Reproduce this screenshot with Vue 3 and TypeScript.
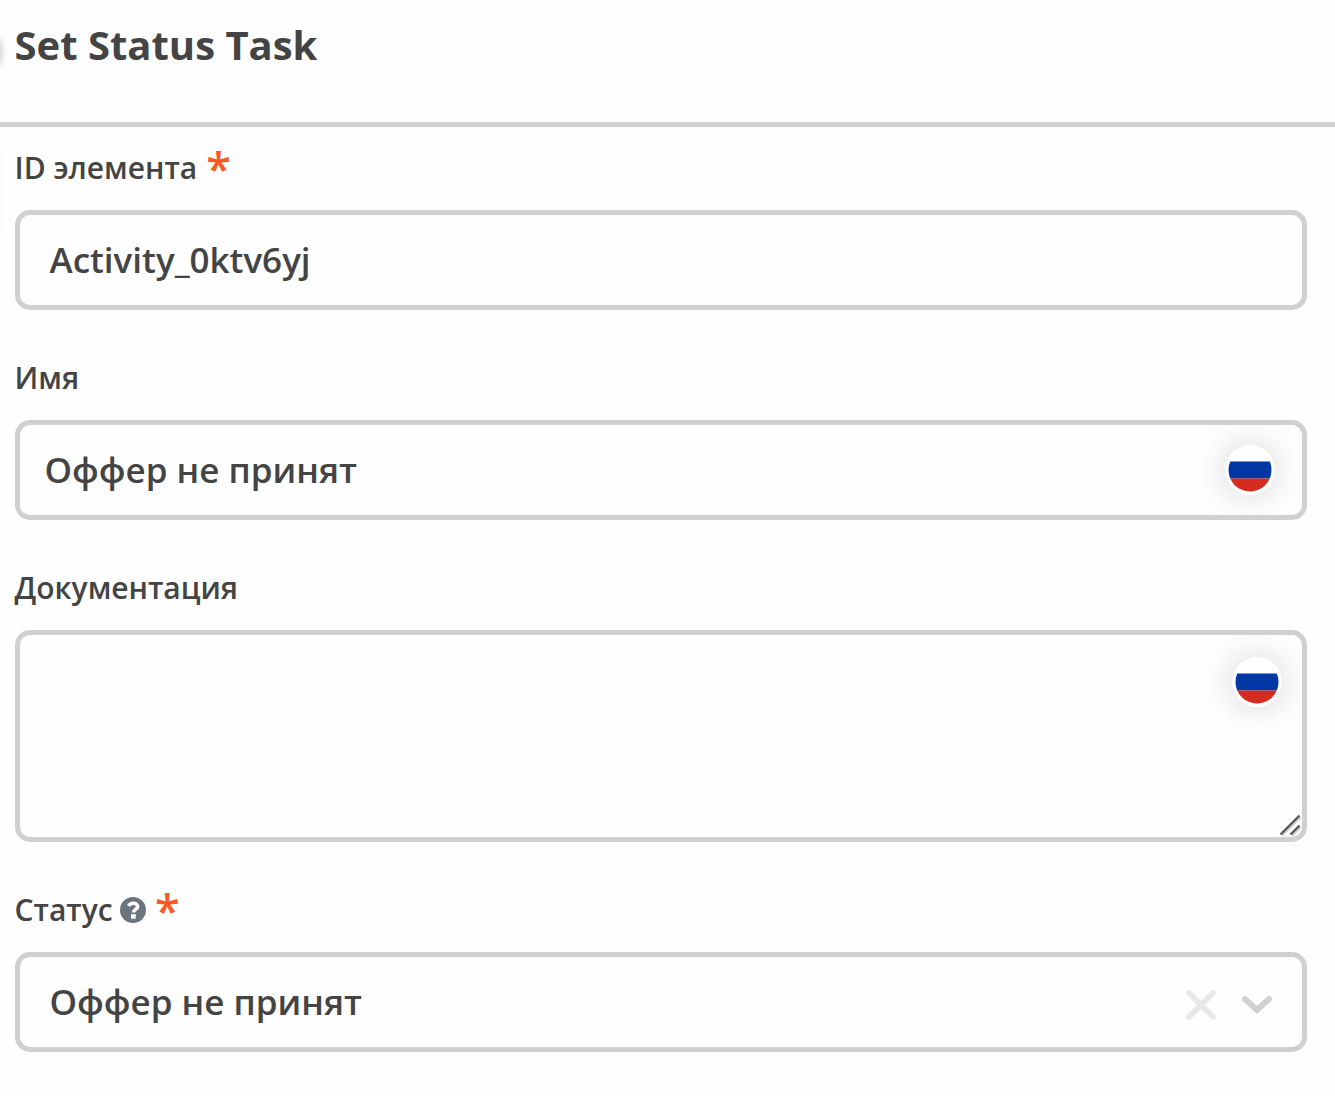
<script setup lang="ts">
import { ref } from 'vue'

const elementId = ref('Activity_0ktv6yj')
const name = ref('Оффер не принят')
const documentation = ref('')
const status = ref('Оффер не принят')
</script>

<template>
  <main class="panel">
    <i class="edge-knob"></i>
    <i class="edge-shade"></i>
    <header class="head">
      <h1>Set Status Task</h1>
    </header>
    <form class="fields">
      <section class="field">
        <label class="label"><span>ID элемента</span><b class="star first">*</b></label>
        <div class="box">
          <span class="value">{{ elementId }}</span>
        </div>
      </section>
      <section class="field">
        <label class="label"><span>Имя</span></label>
        <div class="box name">
          <span class="value">{{ name }}</span>
          <span class="flag">
            <svg viewBox="0 0 50 50" width="50" height="50">
              <clipPath id="flag-name"><circle cx="25" cy="25" r="21.5" /></clipPath>
              <g clip-path="url(#flag-name)">
                <path fill="#0037a5" d="M0 16.500h50v17H0z" />
                <path fill="#d62b1f" d="M0 33.500h50V50H0z" />
              </g>
            </svg>
          </span>
        </div>
      </section>
      <section class="field">
        <label class="label"><span>Документация</span></label>
        <div class="box area">
          <span class="value">{{ documentation }}</span>
          <span class="flag">
            <svg viewBox="0 0 50 50" width="50" height="50">
              <clipPath id="flag-doc"><circle cx="25" cy="25" r="21.5" /></clipPath>
              <g clip-path="url(#flag-doc)">
                <path fill="#0037a5" d="M0 16.500h50v17H0z" />
                <path fill="#d62b1f" d="M0 33.500h50V50H0z" />
              </g>
            </svg>
          </span>
          <svg class="grip" viewBox="0 0 24 24" width="24" height="24">
            <path d="M4 22.500 22.500 4M14 22.500 22.500 14" stroke="#c9c9c9" stroke-width="2.200" />
            <path d="M2.500 21.500 21.500 2.500M12.500 21.500 21.500 12.500" stroke="#58585a" stroke-width="2.300" />
          </svg>
        </div>
      </section>
      <section class="field">
        <label class="label">
          <span>Статус</span>
          <svg class="help" viewBox="0 0 26 26" width="26" height="26">
            <circle cx="13" cy="13" r="13" fill="#6c757d" />
            <path d="M8.500 8.900C9.600 7 11.200 6.200 13.200 6.200c2.600 0 4.500 1.300 4.500 3.300 0 3-4.200 2.800-4.200 6" fill="none" stroke="#fefefe" stroke-width="3.600" />
            <path d="M11 17.200h4.800v4.500H11z" fill="#fefefe" />
          </svg>
          <b class="star second">*</b>
        </label>
        <div class="box">
          <span class="value">{{ status }}</span>
          <svg class="clear" viewBox="0 0 30 30" width="30" height="30">
            <path d="M3 3 27 27M27 3 3 27" fill="none" stroke="#e8e8e8" stroke-width="5.800" stroke-linecap="round" />
          </svg>
          <svg class="caret" viewBox="0 0 30 18" width="30" height="18">
            <path d="M3 3 15 14 27 3" fill="none" stroke="#d0d0d0" stroke-width="5.800" stroke-linecap="round" />
          </svg>
        </div>
      </section>
    </form>
  </main>
</template>

<style>
body {
  margin: 0;
  background: #fefefe;
}
</style>

<style scoped>
.panel {
  position: relative;
  box-sizing: border-box;
  height: 1096px;
  overflow: hidden;
  background: #fefefe;
  color: #444;
  font-family: "Open Sans", "Noto Sans", sans-serif;
}
.edge-knob {
  position: absolute;
  left: -47px;
  top: 27px;
  width: 46px;
  height: 46px;
  border-radius: 50%;
  box-shadow: 0 2px 10px rgba(0, 0, 0, 0.4);
}
.edge-shade {
  position: absolute;
  left: -11px;
  top: 145px;
  width: 10px;
  height: 90px;
  box-shadow: 0 0 8px rgba(0, 0, 0, 0.04);
}
.head {
  box-sizing: border-box;
  height: 127px;
  padding: 15px 14.5px 0;
  border-bottom: 5px solid #d0d0d0;
}
h1 {
  margin: 0;
  font-size: 40px;
  line-height: 60px;
  font-weight: 700;
}
.fields {
  padding: 0 28px 0 15px;
}
.field {
  margin-bottom: 27px;
}
.label {
  box-sizing: border-box;
  display: flex;
  align-items: center;
  height: 83px;
  padding-bottom: 1px;
  margin-left: -0.5px;
  font-size: 30px;
  font-weight: 600;
  white-space: nowrap;
}
.label > span {
  line-height: 42px;
}
.star {
  font-size: 45px;
  line-height: 42px;
  height: 42px;
  font-weight: 600;
  color: #ff5722;
}
.first {
  margin-left: 9px;
}
.second {
  margin-left: 9.5px;
}
.help {
  margin-left: 7px;
}
.box {
  box-sizing: border-box;
  display: flex;
  align-items: center;
  height: 100px;
  padding: 0 30px 0 29.5px;
  border: 5px solid #d0d0d0;
  border-radius: 15px;
}
.name {
  padding: 0 27px 0 24.5px;
}
.area {
  position: relative;
  height: 212px;
  align-items: flex-start;
  padding: 22px 20px 0;
}
.value {
  flex: 1;
  font-size: 35px;
  line-height: 50px;
  font-weight: 600;
}
.flag {
  width: 50px;
  height: 50px;
  border-radius: 50%;
  background: #fff;
  box-shadow: 0 0 35px rgba(0, 0, 0, 0.17);
}
.box.name,
.box.area {
  overflow: hidden;
}
.flag svg,
.clear,
.caret {
  display: block;
}
.grip {
  position: absolute;
  right: 0;
  bottom: 0;
}
.clear {
  margin: 5px 26px 0 0;
}
.caret {
  margin-top: 5px;
}
</style>
